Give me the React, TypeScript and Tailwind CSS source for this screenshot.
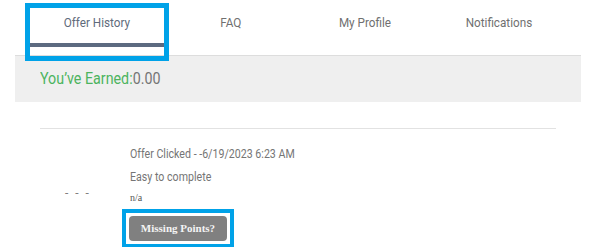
import React from 'react';

const tabs = ['Offer History', 'FAQ', 'My Profile', 'Notifications'];

// condensed look: the page font is a narrow Roboto, so squeeze plain Roboto a bit
const cond = 'inline-block origin-left scale-x-[0.85] whitespace-nowrap';

export default function App() {
  return (
    <div className="w-[592px] h-[247px] bg-white pl-[15px] pr-[11px] pt-[8px]" style={{ fontFamily: 'Roboto, "Liberation Sans", sans-serif' }}>
      <ul className="flex px-[15px] border-b border-[#dddddd]">
        {tabs.map((t, i) => (
          <li key={t} className="w-[134px] h-[47px] relative">
            <div className={`h-[35px] pb-[6px] flex items-center justify-center text-[13px] ${i === 0 ? 'text-[#5f6b7b]' : 'text-[#707070]'}`}>
              <span className="inline-block scale-x-[0.9] whitespace-nowrap">{t}</span>
            </div>
            {i === 0 && (
              <>
                <div className="h-[4px] bg-[#5c6a80]" />
                <div className="absolute -left-[5px] -right-[5px] -top-[5px] -bottom-[6px] border-[5px] border-[#00a2e8] pointer-events-none" />
              </>
            )}
          </li>
        ))}
      </ul>
      <div className="h-[46px] bg-[#efefef] flex items-center pl-[25px] text-[17px]">
        <span className="inline-block origin-left scale-x-[0.84] whitespace-nowrap">
          <span className="text-[#4cb45e]">You’ve Earned:</span>
          <span className="text-[#757575]">0.00</span>
        </span>
      </div>
      <div className="mx-[25px] mt-[26px] border-t border-[#e2e2e2] flex">
        <div className="w-[90px] flex items-center pl-[25px] pt-[8px] text-[#808080] text-[12px] tracking-[2px] whitespace-pre">- - -</div>
        <div className="pt-[16px] text-[#757575] text-[12.5px]">
          <div className="leading-[18px]"><span className={cond}>Offer Clicked - -6/19/2023 6:23 AM</span></div>
          <div className="leading-[18px] mt-[5px]"><span className={cond}>Easy to complete</span></div>
          <div className="mt-[5px] text-[10px] leading-[14px] text-[#555]" style={{ fontFamily: '"Liberation Serif", serif' }}>n/a</div>
          <div className="mt-[4px] -ml-[8px] inline-block border-[4px] border-[#00a2e8] p-[3px]">
            <button className="w-[98px] h-[25px] rounded-[4px] bg-[#808080] text-[#f4f4f4] text-[11px] font-bold" style={{ fontFamily: '"Liberation Serif", serif' }}>
              Missing Points?
            </button>
          </div>
        </div>
      </div>
    </div>
  );
}
